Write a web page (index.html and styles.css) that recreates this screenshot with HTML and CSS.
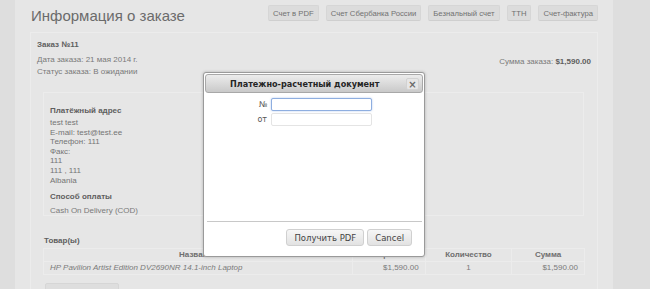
FILE: index.html
```html
<!DOCTYPE html>
<html>
<head>
<meta charset="utf-8">
<link rel="stylesheet" href="styles.css">
</head>
<body>
<div class="page">
  <div class="head">
    <h1 class="title">Информация о заказе</h1>
    <div class="actions">
      <span class="btn">Счет в PDF</span>
      <span class="btn">Счет Сбербанка России</span>
      <span class="btn">Безнальный счет</span>
      <span class="btn">ТТН</span>
      <span class="btn">Счет-фактура</span>
    </div>
  </div>
  <div class="order">
    <div class="order-top">
      <div class="order-info">
        <div class="strong">Заказ №11</div>
        <div class="line gap">Дата заказа: 21 мая 2014 г.</div>
        <div class="line">Статус заказа: В ожидании</div>
      </div>
      <div class="order-sum">Сумма заказа: <b>$1,590.00</b></div>
    </div>
    <div class="addr">
      <div class="strong">Платёжный адрес</div>
      <div class="lines">
        <div>test test</div>
        <div>E-mail: test@test.ee</div>
        <div>Телефон: 111</div>
        <div>Факс:</div>
        <div>111</div>
        <div>111 , 111</div>
        <div>Albania</div>
      </div>
      <div class="strong pay">Способ оплаты</div>
      <div class="cod">Cash On Delivery (COD)</div>
    </div>
    <div class="strong goods">Товар(ы)</div>
    <table class="items">
      <tr class="th">
        <td class="c-name">Название</td>
        <td class="c-price">Цена</td>
        <td class="c-qty">Количество</td>
        <td class="c-sum">Сумма</td>
      </tr>
      <tr class="td">
        <td class="c-name"><i>HP Pavilion Artist Edition DV2690NR 14.1-inch Laptop</i></td>
        <td class="c-price r">$1,590.00</td>
        <td class="c-qty">1</td>
        <td class="c-sum r">$1,590.00</td>
      </tr>
    </table>
    <div class="back"></div>
  </div>
</div>

<div class="dialog">
  <div class="dlg-head">
    <span class="dlg-title">Платежно-расчетный документ</span>
    <span class="dlg-close">×</span>
  </div>
  <div class="dlg-body">
    <div class="row"><label>№</label><span class="inp focus"></span></div>
    <div class="row"><label>от</label><span class="inp"></span></div>
  </div>
  <div class="dlg-foot">
    <span class="dbtn">Получить PDF</span>
    <span class="dbtn">Cancel</span>
  </div>
</div>
</body>
</html>
```

FILE: styles.css
```css
html, body {
  margin: 0;
  padding: 0;
}
body {
  background: #dedede;
  font-family: "Liberation Sans", Arial, sans-serif;
  font-size: 8px;
  color: #7a7a7a;
  width: 650px;
  height: 289px;
  overflow: hidden;
  position: relative;
}
.page {
  margin-left: 15px;
  width: 568px;
  height: 289px;
  padding: 0 15px;
  background: #e6e6e6;
  overflow: hidden;
}
.head {
  display: flex;
  justify-content: space-between;
  height: 32px;
}
.title {
  margin: 6px 0 0 1px;
  font-size: 15px;
  font-weight: normal;
  color: #6b6b6b;
  line-height: 20px;
}
.actions {
  display: flex;
  gap: 7px;
  margin-top: 5px;
  height: 16px;
}
.btn {
  display: flex;
  align-items: center;
  padding: 0 4px;
  height: 14px;
  background: #dcdcdc;
  border: 1px solid #d6d6d6;
  border-bottom-color: #cfcfcf;
  border-radius: 2px;
  color: #717171;
  font-size: 7.7px;
}
.order {
  border: 1px solid #ececec;
  border-bottom: 0;
  padding: 6px 6px 0 6px;
  height: 300px;
}
.order-top {
  display: flex;
  justify-content: space-between;
}
.strong {
  font-weight: bold;
  color: #5e5e5e;
}
.order-info .strong {
  line-height: 11px;
}
.line {
  line-height: 12px;
}
.gap {
  margin-top: 4px;
}
.order-sum {
  margin-top: 17px;
  line-height: 11px;
  color: #7a7a7a;
}
.order-sum b {
  color: #5e5e5e;
}
.addr {
  margin: 14px 7px 0 6px;
  border: 1px solid #ececec;
  height: 110px;
  padding: 12px 6px 0 6px;
}
.lines {
  margin-top: 2px;
  line-height: 9.6px;
  color: #747474;
}
.pay {
  margin-top: 6px;
  line-height: 11px;
}
.cod {
  margin-top: 3px;
  line-height: 11px;
}
.addr .strong:first-child {
  line-height: 11px;
}
.goods {
  margin: 19px 0 0 7px;
  line-height: 11px;
}
.items {
  margin: 2px 0 0 6px;
  width: 542px;
  border-collapse: collapse;
  font-size: 8px;
}
.items td {
  border: 1px solid #ececec;
  height: 12px;
  padding: 0 6px;
  line-height: 12px;
}
.th td {
  text-align: center;
  font-weight: bold;
  color: #6e6e6e;
}
.td td {
  color: #7a7a7a;
}
.td .c-qty {
  text-align: center;
}
.td .r {
  text-align: right;
}
.c-name { width: 299px; }
.c-price { width: 60px; }
.c-qty { width: 74px; }
.c-sum { width: 60px; }
.back {
  margin: 8px 0 0 8px;
  width: 72px;
  height: 16px;
  border: 1px solid #d6d6d6;
  background: #dedede;
  border-radius: 2px;
}

.dialog {
  position: absolute;
  left: 203px;
  top: 72px;
  width: 218px;
  height: 181px;
  padding: 1px;
  background: #fff;
  border: 1px solid #9a9a9a;
  border-radius: 3px;
  box-shadow: 0 0 3px rgba(0,0,0,0.25);
  font-family: "DejaVu Sans", Verdana, sans-serif;
  display: flex;
  flex-direction: column;
}
.dlg-head {
  height: 17px;
  border: 1px solid #a8a8a8;
  border-radius: 3px;
  background: linear-gradient(#ececec, #c9c9c9);
  display: flex;
  align-items: center;
  justify-content: space-between;
  padding: 0 3px 0 24px;
}
.dlg-title {
  font-weight: bold;
  font-size: 8.1px;
  color: #252525;
}
.dlg-close {
  width: 13px;
  height: 12px;
  background: #e6e6e6;
  border: 1px solid #d2d2d2;
  border-radius: 2px;
  color: #6a6a6a;
  font-weight: bold;
  font-size: 10px;
  line-height: 11px;
  text-align: center;
  box-sizing: border-box;
}
.dlg-body {
  flex: 1;
  padding-top: 5px;
  display: flex;
  flex-direction: column;
  gap: 2px;
}
.row {
  display: flex;
  align-items: center;
  height: 13px;
}
.row label {
  width: 62px;
  text-align: right;
  padding-right: 4px;
  font-size: 8px;
  color: #555;
}
.inp {
  width: 99px;
  height: 11px;
  border: 1px solid #e4e4e4;
  border-radius: 2px;
  background: #fff;
}
.inp.focus {
  border-color: #8eaee0;
  box-shadow: 0 0 2px rgba(90,140,220,0.5);
}
.dlg-foot {
  margin: 0 1px 0 2px;
  border-top: 1px solid #c8c8c8;
  height: 34px;
  display: flex;
  justify-content: flex-end;
  align-items: flex-start;
  gap: 3px;
  padding: 7px 10px 0 0;
  box-sizing: border-box;
}
.dbtn {
  height: 15px;
  padding: 0 7px;
  display: flex;
  align-items: center;
  border: 1px solid #d0d0d0;
  border-radius: 3px;
  background: linear-gradient(#f6f6f6, #e2e2e2);
  color: #444;
  font-size: 8.5px;
}
```
